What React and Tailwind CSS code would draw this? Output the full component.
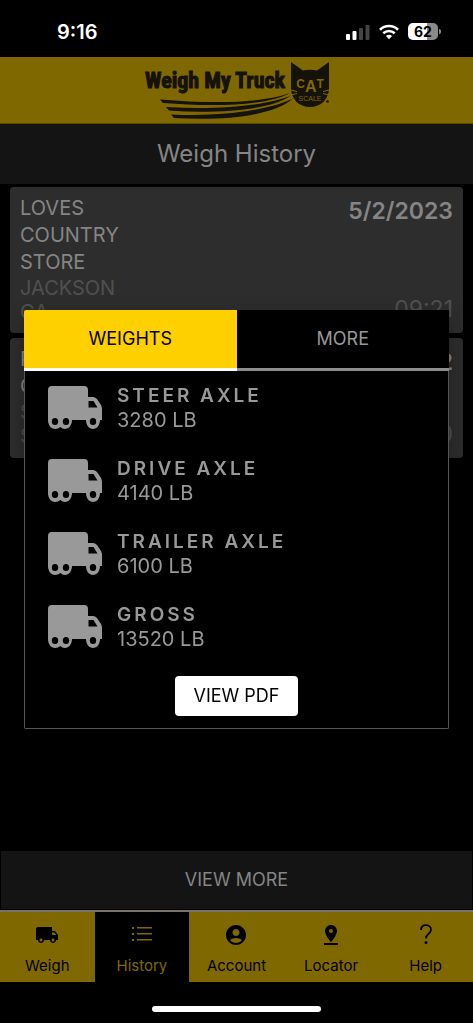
import { MdLocalShipping, MdAccountCircle, MdPinDrop } from 'react-icons/md'

const weights = [
  { label: 'STEER AXLE', value: '3280 LB' },
  { label: 'DRIVE AXLE', value: '4140 LB' },
  { label: 'TRAILER AXLE', value: '6100 LB' },
  { label: 'GROSS', value: '13520 LB' },
]

function ListIcon() {
  return (
    <svg viewBox="0 0 24 24" className="size-6" fill="currentColor" aria-hidden="true">
      <path d="M2 4h2v2H2zM2 10h2v2H2zM2 16h2v2H2zM7 4h15v1.500H7zM7 10h15v1.500H7zM7 16h15v1.500H7z" />
    </svg>
  )
}

function HelpIcon() {
  return (
    <svg viewBox="0 0 24 24" className="size-6" fill="none" stroke="currentColor" strokeWidth="1.8" aria-hidden="true">
      <path d="M7 7C7 4.200 9 2.200 12 2.200s5 1.900 5 4.500c0 4.300-5 3.900-5 8.800" />
      <circle cx="12" cy="19.500" r="1.500" fill="currentColor" stroke="none" />
    </svg>
  )
}

const tabs = [
  { label: 'Weigh', icon: <MdLocalShipping className="size-6" /> },
  { label: 'History', icon: <ListIcon />, active: true },
  { label: 'Account', icon: <MdAccountCircle className="size-6" /> },
  { label: 'Locator', icon: <MdPinDrop className="size-6" /> },
  { label: 'Help', icon: <HelpIcon /> },
]

function TruckIcon() {
  return (
    <svg viewBox="0 0 54 43" className="h-[43px] w-[54px] shrink-0" aria-hidden="true">
      <path
        fill="#999"
        fillRule="evenodd"
        d="M4 0H36Q40 0 40 4V11H45Q47 11 49 13L53 19Q54 21 54 23V34H52C52 39 49 43 45 43S38 39 38 34H24C24 39 21 43 17 43Q14 43 12.500 41Q10 43 7 43C3 43 0 39 0 34V4Q0 0 4 0ZM40.500 15V21.500H49.500L45.500 15ZM7 32A3.200 3.500 0 1 0 7 39A3.200 3.500 0 1 0 7 32ZM18 32A3.200 3.500 0 1 0 18 39A3.200 3.500 0 1 0 18 32ZM45 32A3.200 3.500 0 1 0 45 39A3.200 3.500 0 1 0 45 32Z"
      />
    </svg>
  )
}

function StatusBar() {
  return (
    <div className="flex h-[57px] items-center justify-between bg-black pr-8 pl-[57px] pt-1.5 text-white">
      <span className="text-xl font-semibold">9:16</span>
      <div className="flex items-center gap-[9px]">
        <svg viewBox="0 0 24 16" className="h-4 w-6" aria-label="Signal">
          <rect x="0" y="10" width="4" height="6" rx="1" fill="#fff" />
          <rect x="6.500" y="7" width="4" height="9" rx="1" fill="#fff" />
          <rect x="13" y="4" width="4" height="12" rx="1" fill="#444" />
          <rect x="19.500" y="1" width="4" height="15" rx="1" fill="#444" />
        </svg>
        <svg viewBox="0 0 20 16" className="h-4 w-5" fill="none" stroke="#fff" strokeWidth="2.600" aria-label="Wi-Fi">
          <path d="M1 5.700C6 .8 14 .8 19 5.700M4.300 9.300C7.500 6.300 12.500 6.300 15.700 9.300" />
          <path d="M6.900 12C8.700 10.400 11.300 10.400 13.100 12L10 15.300Z" fill="#fff" stroke="none" />
        </svg>
        <div className="flex items-center gap-px">
          <div className="flex h-[17px] w-[30px] items-center justify-center rounded-[5px] bg-linear-to-r from-white from-62% to-[#8a8a8a] to-62% text-sm font-bold text-black">
            62
          </div>
          <span className="h-[5px] w-[2px] rounded-r-full bg-[#8a8a8a]" />
        </div>
      </div>
    </div>
  )
}

function Logo() {
  return (
    <svg viewBox="0 0 188 66" className="h-[66px] w-[188px]" role="img" aria-label="Weigh My Truck CAT Scale">
      <text
        x="2"
        y="31"
        fontFamily="'Roboto Condensed', Roboto, sans-serif"
        fontSize="22"
        fontWeight="700"
        fill="#15120a"
        stroke="#15120a"
        strokeWidth="1"
      >
        Weigh My Truck
      </text>
      <g fill="#15120a">
        <path d="M17 42.500C70 47 120 46 147 36C124 49 70 50 20 46Z" />
        <path d="M23 50C75 53 123 49 148 38.500C128 53 75 57 26 53.500Z" />
        <path d="M28 57.500C80 60 126 53 150 41.500C130 59 82 64 31 61Z" />
        <path d="M148 5L160 13.500Q167 12 174 13.500L186 5V31C186 42 178 50 167 50S148 42 148 31Z" />
        <circle cx="184.500" cy="44.500" r="1.300" />
      </g>
      <g fill="#806800" fontFamily="'Liberation Sans', Arial, sans-serif" textAnchor="middle">
        <text x="167" y="31" fontSize="12" fontWeight="700">
          C<tspan fontSize="16" dy="4">A</tspan><tspan dy="-4">T</tspan>
        </text>
        <text x="167" y="44" fontSize="7">SCALE</text>
      </g>
      <path d="M148 33L154 34.500M148 38L154 36.500M186 33L180 34.500M186 38L180 36.500" stroke="#806800" />
    </svg>
  )
}

function HistoryCard({ name, city, date, time, className }) {
  return (
    <article className={`flex justify-between rounded bg-[#2d2d2d] px-2.5 text-xl ${className}`}>
      <div className="w-28">
        <h2 className="leading-[27px] text-[#858585]">{name}</h2>
        <p className="leading-6 text-[#505050]">{city}</p>
      </div>
      <div className="flex flex-col items-end justify-between">
        <span className="text-[23px] leading-8 font-semibold text-[#858585]">{date}</span>
        <span className="text-[23px] leading-7 text-[#505050]">{time}</span>
      </div>
    </article>
  )
}

function WeightsModal() {
  return (
    <div className="fixed inset-0 flex items-center justify-center px-6 pt-[15px]">
      <div
        role="dialog"
        aria-label="Weights"
        className="w-full rounded-xs border border-[#555] border-t-black bg-black shadow-[0_8px_20px_rgba(0,0,0,0.3)]"
      >
        <div role="tablist" className="-mx-px -mt-px grid grid-cols-2 text-lg">
          <button role="tab" aria-selected="true" className="h-[61px] rounded-tl-xs border-b-3 border-white bg-[#ffd000] text-black">
            WEIGHTS
          </button>
          <button role="tab" aria-selected="false" className="h-[61px] border-b-3 border-[#8c8c8c] bg-black text-[#999]">
            MORE
          </button>
        </div>
        <ul className="flex flex-col gap-[23px] pt-3 pl-[23px] text-[#999]">
          {weights.map((w) => (
            <li key={w.label} className="flex items-center gap-[15px]">
              <TruckIcon />
              <div>
                <div className="text-[19px] leading-[25px] font-semibold tracking-[3px]">{w.label}</div>
                <div className="text-xl leading-[25px]">{w.value}</div>
              </div>
            </li>
          ))}
        </ul>
        <div className="flex justify-center pt-6 pb-3">
          <button className="h-10 rounded bg-white px-[19px] text-lg text-black">VIEW PDF</button>
        </div>
      </div>
    </div>
  )
}

export default function App() {
  return (
    <div className="flex min-h-screen flex-col bg-black font-[Inter,sans-serif]">
      <StatusBar />
      <header className="flex h-[67px] justify-center border-b border-[#5a4a00] bg-[#806800]">
        <Logo />
      </header>
      <h1 className="bg-[#141414] text-center text-2xl leading-[60px] text-[#858585]">Weigh History</h1>

      <main className="flex flex-1 flex-col gap-[5px] px-2.5 pt-[3px]">
        <HistoryCard name="LOVES COUNTRY STORE" city="JACKSON GA" date="5/2/2023" time="09:21" className="h-[146px] pt-2 pb-2.5" />
        <HistoryCard name="PILOT CENTER" city="SUMTER SC" date="5/1/2022" time="10:20" className="h-[120px] pt-2 pb-2.5" />
      </main>

      <button className="mx-px mb-px h-[58px] bg-[#141414] text-lg text-[#858585]">VIEW MORE</button>

      <nav className="grid grid-cols-5 border-t-2 border-[#77736a] bg-[#806800]">
        {tabs.map((tab) => (
          <a
            key={tab.label}
            href={`#${tab.label.toLowerCase()}`}
            aria-current={tab.active ? 'page' : undefined}
            className={`flex h-[70px] flex-col items-center gap-2 pt-[11px] text-[15px] ${
              tab.active ? 'bg-black text-[#806800]' : 'text-black'
            }`}
          >
            {tab.icon}
            <span>{tab.label}</span>
          </a>
        ))}
      </nav>
      <div className="flex h-[41px] justify-center bg-black pt-6">
        <span className="h-1.5 w-[169px] rounded-full bg-white" />
      </div>

      <WeightsModal />
    </div>
  )
}
